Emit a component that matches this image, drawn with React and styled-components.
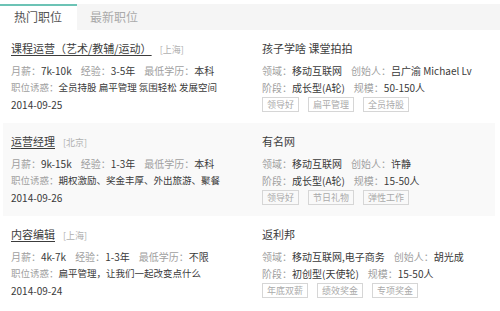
import React from 'react'
import styled, { createGlobalStyle } from 'styled-components'

const GlobalStyle = createGlobalStyle`
  body {
    margin: 0;
    background: #fff;
    font-family: "Noto Sans CJK SC", "Noto Sans", sans-serif;
  }
`

const jobs = [
  {
    title: '课程运营（艺术/教辅/运动）',
    city: '上海',
    salary: '7k-10k',
    exp: '3-5年',
    edu: '本科',
    lure: '全员持股 扁平管理 氛围轻松 发展空间',
    date: '2014-09-25',
    company: '孩子学啥 课堂拍拍',
    field: '移动互联网',
    founder: '吕广渝 Michael Lv',
    stage: '成长型(A轮)',
    size: '50-150人',
    tags: ['领导好', '扁平管理', '全员持股'],
  },
  {
    title: '运营经理',
    city: '北京',
    salary: '9k-15k',
    exp: '1-3年',
    edu: '本科',
    lure: '期权激励、奖金丰厚、外出旅游、聚餐',
    date: '2014-09-26',
    company: '有名网',
    field: '移动互联网',
    founder: '许静',
    stage: '成长型(A轮)',
    size: '15-50人',
    tags: ['领导好', '节日礼物', '弹性工作'],
  },
  {
    title: '内容编辑',
    city: '上海',
    salary: '4k-7k',
    exp: '1-3年',
    edu: '不限',
    lure: '扁平管理，让我们一起改变点什么',
    date: '2014-09-24',
    company: '返利邦',
    field: '移动互联网,电子商务',
    founder: '胡光成',
    stage: '初创型(天使轮)',
    size: '15-50人',
    tags: ['年底双薪', '绩效奖金', '专项奖金'],
  },
]

const App = () => {
  return (
    <Page>
      <GlobalStyle />
      <Tabs>
        <Tab active>热门职位</Tab>
        <Tab>最新职位</Tab>
      </Tabs>
      <List>
        {jobs.map((job, i) => (
          <Row key={job.title} striped={i % 2 === 1}>
            <Column>
              <TitleLine>
                <JobTitle>{job.title}</JobTitle>
                <City>[{job.city}]</City>
              </TitleLine>
              <Info>
                <Label>月薪：</Label><Value>{job.salary}</Value>
                <Label>经验：</Label><Value>{job.exp}</Value>
                <Label>最低学历：</Label><Value>{job.edu}</Value>
              </Info>
              <Info small>
                <Label>职位诱惑：</Label><Value>{job.lure}</Value>
              </Info>
              <Info><Value>{job.date}</Value></Info>
            </Column>
            <Column>
              <TitleLine>
                <Company>{job.company}</Company>
              </TitleLine>
              <Info>
                <Label>领域：</Label><Value>{job.field}</Value>
                <Label>创始人：</Label><Value>{job.founder}</Value>
              </Info>
              <Info>
                <Label>阶段：</Label><Value>{job.stage}</Value>
                <Label>规模：</Label><Value>{job.size}</Value>
              </Info>
              <Tags>
                {job.tags.map((t) => (
                  <Tag key={t}>{t}</Tag>
                ))}
              </Tags>
            </Column>
          </Row>
        ))}
      </List>
    </Page>
  )
}

export default App

const Page = styled.div`
  width: 500px;
  height: 311px;
  overflow: hidden;
  padding-top: 4px;
  box-sizing: border-box;
`
const Tabs = styled.div`
  display: flex;
  height: 26px;
  background: #f5f5f5;
`
const Tab = styled.div`
  width: 77px;
  box-sizing: border-box;
  padding-left: ${(p) => (p.active ? '14px' : '13px')};
  border-top: 2px solid ${(p) => (p.active ? '#6cc3b5' : 'transparent')};
  background: ${(p) => (p.active ? '#fff' : 'transparent')};
  color: ${(p) => (p.active ? '#555' : '#aaa')};
  font-size: 12px;
  line-height: 22px;
`
const List = styled.div`
  display: flex;
  flex-direction: column;
  padding: 0 5px 0 3px;
`
const Row = styled.div`
  display: grid;
  grid-template-columns: 251px 1fr;
  height: 93px;
  box-sizing: border-box;
  padding: 9px 8px 0;
  background: ${(p) => (p.striped ? '#f9f9f9' : '#fff')};
`
const Column = styled.div`
  display: flex;
  flex-direction: column;
`
const TitleLine = styled.div`
  display: flex;
  align-items: baseline;
  gap: 8px;
  height: 18px;
  line-height: 18px;
  margin-bottom: 5px;
`
const JobTitle = styled.span`
  font-size: 11px;
  color: #3c3c3c;
  text-decoration: underline;
  text-underline-offset: 2px;
`
const City = styled.span`
  font-size: 9px;
  color: #b0b0b0;
`
const Company = styled.span`
  font-size: 11px;
  color: #3c3c3c;
`
const Info = styled.div`
  font-size: ${(p) => (p.small ? '9.5px' : '10px')};
  line-height: 17px;
  white-space: nowrap;
`
const Label = styled.span`
  color: #a0a0a0;
  margin-left: 9px;
  &:first-child {
    margin-left: 0;
  }
`
const Value = styled.span`
  color: #3a3a3a;
`
const Tags = styled.div`
  display: flex;
  gap: 9px;
  margin-top: 1px;
`
const Tag = styled.span`
  border: 1px solid #d6d6d6;
  color: #aaa;
  font-size: 9px;
  line-height: 13px;
  padding: 0 4px;
`
